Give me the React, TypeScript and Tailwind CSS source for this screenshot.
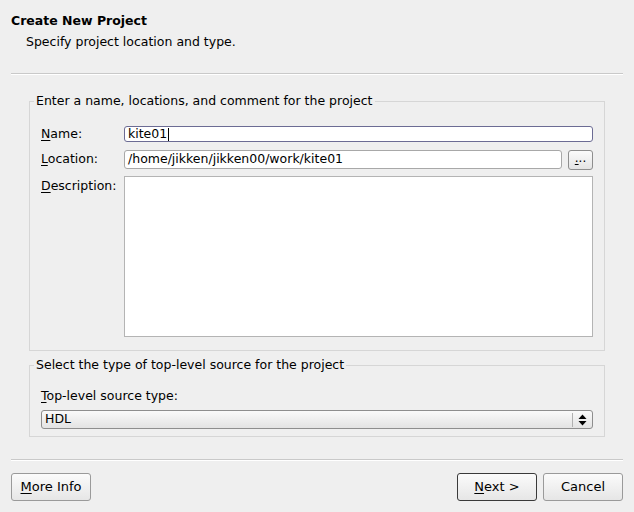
import React from "react";

const U = ({ c }: { c: string }) => <span className="underline underline-offset-2">{c}</span>;

function Btn({ children, def }: { children: React.ReactNode; def?: boolean }) {
  return (
    <div
      className={`w-[80px] h-[28px] flex items-center justify-center rounded-[3px] border bg-gradient-to-b from-[#fbfbfb] to-[#e6e6e6] text-[13px] ${
        def ? "border-[#3a3a3a]" : "border-[#9a9a9a]"
      }`}
    >
      {children}
    </div>
  );
}

export default function App() {
  return (
    <div
      className="w-[634px] h-[512px] bg-[#efefef] text-black text-[12.5px] flex flex-col overflow-hidden"
      style={{ fontFamily: '"DejaVu Sans", sans-serif' }}
    >
      <div className="pl-[11px] pt-[12px] h-[73px]">
        <div className="font-bold leading-[18px]">Create New Project</div>
        <div className="pl-[15px] mt-[3px] leading-[18px]">Specify project location and type.</div>
      </div>
      <div className="mx-[11px] h-[2px] border-t border-[#c9c9c9] border-b border-b-white" />

      <fieldset className="mx-[29px] mt-[18px] h-[258px] border border-[#d6d6d6] px-[11px] pb-[12px]">
        <legend className="-ml-[7px] px-[2px] leading-[16px]">Enter a name, locations, and comment for the project</legend>
        <div className="flex flex-col mt-[17px]">
          <div className="flex items-center h-[16px]">
            <div className="w-[83px]">
              <U c="N" />ame:
            </div>
            <div className="flex-1 h-[16px] border border-[#6c6c94] rounded-[3px] bg-white flex items-center pl-[3px] leading-none">
              kite01<span className="w-px h-[13px] bg-black ml-[1px]" />
            </div>
          </div>
          <div className="flex items-center h-[19px] mt-[8px]">
            <div className="w-[83px]">
              <U c="L" />ocation:
            </div>
            <div className="flex-1 h-[19px] border border-[#a8a8a8] rounded-[3px] bg-white flex items-center pl-[3px] leading-none">
              /home/jikken/jikken00/work/kite01
            </div>
            <div className="ml-[6px] w-[25px] h-[20px] border border-[#8e8e8e] rounded-[3px] bg-gradient-to-b from-[#fbfbfb] to-[#e4e4e4] flex items-center justify-center text-[12px] leading-none pb-[4px]">
              <U c="." />..
            </div>
          </div>
          <div className="flex items-start mt-[7px]">
            <div className="w-[83px] pt-[1px]">
              <U c="D" />escription:
            </div>
            <div className="flex-1 h-[161px] border border-[#b4b4b4] bg-white" />
          </div>
        </div>
      </fieldset>

      <fieldset className="mx-[29px] mt-[6px] h-[80px] border border-[#d6d6d6] px-[11px]">
        <legend className="-ml-[7px] px-[2px] leading-[16px]">Select the type of top-level source for the project</legend>
        <div className="mt-[15px] leading-[16px]">
          <U c="T" />op-level source type:
        </div>
        <div className="mt-[6px] h-[19px] border border-[#8e8e8e] rounded-[3px] bg-gradient-to-b from-[#fafafa] to-[#e3e3e3] flex items-center pl-[3px] leading-none">
          <span className="flex-1">HDL</span>
          <span className="w-px h-[14px] bg-[#b0b0b0]" />
          <span className="w-[19px] flex items-center justify-center">
            <svg width="9" height="12" viewBox="0 0 9 12">
              <path d="M4.5 0.5 L8.5 5 L0.5 5 Z" fill="#000" />
              <path d="M4.5 11.5 L8.5 7 L0.5 7 Z" fill="#000" />
            </svg>
          </span>
        </div>
      </fieldset>

      <div className="mx-[11px] mt-[22px] h-[2px] border-t border-[#c9c9c9] border-b border-b-white" />
      <div className="flex mx-[11px] mt-[12px] gap-[6px]">
        <Btn>
          <U c="M" />ore Info
        </Btn>
        <div className="flex-1" />
        <Btn def>
          <U c="N" />ext &gt;
        </Btn>
        <Btn>Cancel</Btn>
      </div>
    </div>
  );
}
